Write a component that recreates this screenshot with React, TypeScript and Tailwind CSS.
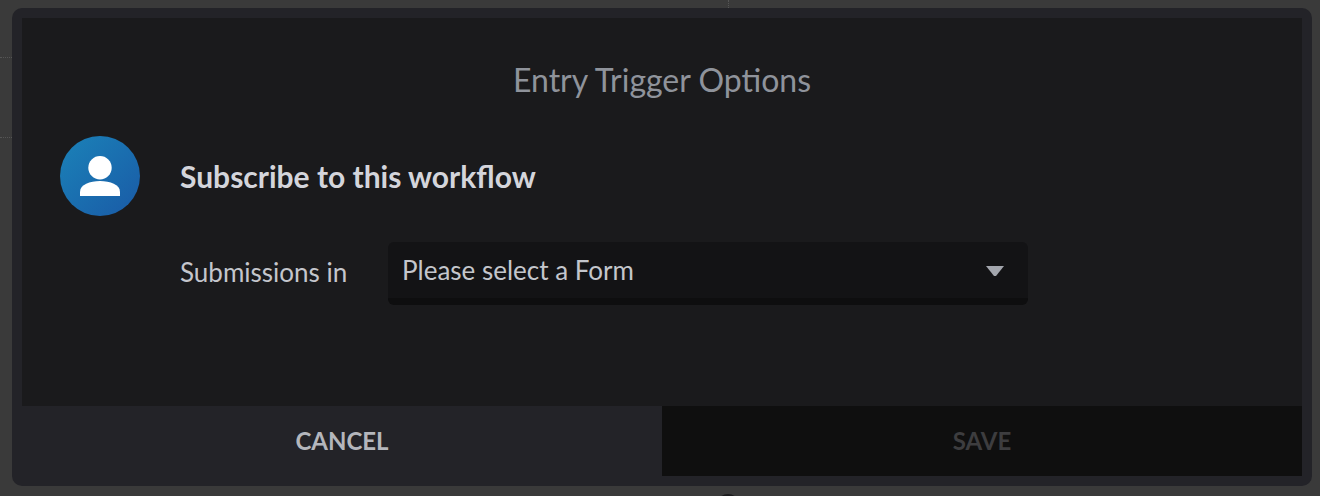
import React from 'react';

function UserIcon() {
  return (
    <svg width="40" height="40" viewBox="0 0 40 40" fill="#fff">
      <circle cx="20" cy="11.7" r="11.7" />
      <path d="M0 40 V36 C0 28.5 10 25 20 25 C30 25 40 28.5 40 36 V40 Z" />
    </svg>
  );
}

export default function App() {
  return (
    <div className="relative w-[1320px] h-[496px] overflow-hidden bg-[#3a3a3a] pt-2 pl-3 font-['Lato','Noto_Sans',sans-serif]">
      {/* bits of the page behind the dialog */}
      <div className="absolute left-0 top-[57px] w-3 border-t border-dotted border-[#555]" />
      <div className="absolute left-0 top-[137px] w-3 border-t border-dotted border-[#555]" />
      <div className="absolute left-[728px] top-0 h-2 border-l border-dotted border-[#555]" />
      <div className="absolute left-[716px] top-[494px] w-6 h-6 rounded-full bg-[#1b1b1d]" />

      <div className="relative w-[1300px] h-[478px] rounded-[10px] bg-[#232328] p-2.5 flex flex-col">
        <div className="flex-1 bg-[#1a1a1c] flex flex-col">
          <h2 className="mt-[44px] text-center text-[32px] leading-9 text-[#8f939b] font-normal">
            Entry Trigger Options
          </h2>
          <div className="mt-[38px] pl-[38px] flex items-center">
            <div className="w-20 h-20 rounded-full bg-gradient-to-br from-[#1b82b8] to-[#1a5aa6] flex items-center justify-center">
              <UserIcon />
            </div>
            <h3 className="ml-10 text-[30px] leading-9 font-bold text-[#d4d5db]">Subscribe to this workflow</h3>
          </div>
          <div className="mt-[26px] pl-[158px] flex items-center">
            <span className="w-52 text-[26px] leading-8 mb-[3px] text-[#c4c6cc]">Submissions in</span>
            <div className="w-[640px] h-[63px] rounded-md bg-[#131315] border-b-[7px] border-[#0e0e0f] pl-[14px] pr-6 flex items-center justify-between">
              <span className="text-[26px] leading-8 text-[#c4c6cc]">Please select a Form</span>
              <svg width="18" height="10" viewBox="0 0 18 10" className="mt-0.5">
                <path d="M0 0 H18 L10 10 H8 Z" fill="#a3a6ad" />
              </svg>
            </div>
          </div>
        </div>
        <div className="h-[70px] flex text-2xl font-bold">
          <button className="flex-1 bg-[#232328] text-[#b4b6bc]">CANCEL</button>
          <button className="flex-1 bg-[#0f0f0f] text-[#3d3d3f]">SAVE</button>
        </div>
      </div>
    </div>
  );
}
